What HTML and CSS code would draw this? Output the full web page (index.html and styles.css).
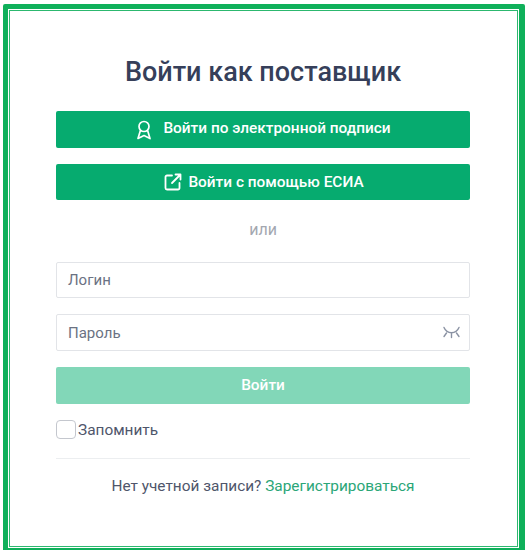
FILE: index.html
```html
<!DOCTYPE html>
<html lang="ru">
<head>
<meta charset="utf-8">
<title>Войти как поставщик</title>
<link rel="stylesheet" href="styles.css">
</head>
<body>
<div class="frame">
  <div class="inner">
    <main class="card">
      <h1 class="title">Войти как поставщик</h1>
      <button class="btn btn-sign" type="button">
        <svg class="icon-award" width="14" height="20" viewBox="0 0 14 20" fill="none" stroke="currentColor" stroke-width="1.700" stroke-linejoin="round"><circle cx="7" cy="6.500" r="5"/><path d="M3.400 10.500L1 18.500L7 15.500L13 18.500L10.600 10.500"/></svg>
        <span class="sign-label">Войти по электронной подписи</span>
      </button>
      <button class="btn btn-esia" type="button">
        <svg class="icon-ext" width="18" height="18" viewBox="0 0 18 18" fill="none" stroke="currentColor" stroke-width="1.800" stroke-linecap="round" stroke-linejoin="round"><path d="M8 2.500H3A1.500 1.500 0 0 0 1.500 4V15A1.500 1.500 0 0 0 3 16.500H14A1.500 1.500 0 0 0 15.500 15V10"/><path d="M8 10L16 2M11.500 1.500H16.500V6.500"/></svg>
        <span>Войти с помощью ЕСИА</span>
      </button>
      <div class="or">или</div>
      <div class="field field-login"><span class="placeholder">Логин</span></div>
      <div class="field field-pass">
        <span class="placeholder">Пароль</span>
        <svg class="icon-eye" width="17" height="13" viewBox="0 0 17 13" fill="none" stroke="#8a92a3" stroke-width="1.400" stroke-linecap="round"><path d="M1 1.500C4 8.500 13 8.500 16 1.500M1 10.500L3.500 7M16 10.500L13.500 7M8.500 7V11.500"/></svg>
      </div>
      <button class="btn btn-login" type="button">Войти</button>
      <label class="remember"><span class="check"></span><span>Запомнить</span></label>
      <hr class="divider">
      <p class="signup">Нет учетной записи? <a href="#" class="link">Зарегистрироваться</a></p>
    </main>
  </div>
</div>
</body>
</html>
```
FILE: styles.css
```css
html, body {
  margin: 0;
  height: 550px;
  overflow: hidden;
  background: #fff;
}
body {
  font-family: Roboto, "Noto Sans", sans-serif;
  padding: 4px 1px 0 3px;
  box-sizing: border-box;
}
.frame {
  border: 5px solid #0fb05a;
  border-right-width: 6px;
  border-radius: 2px;
  height: 549px;
  box-sizing: border-box;
  padding: 1px;
}
.inner {
  border: 1px solid #2cb86f;
  height: 100%;
  box-sizing: border-box;
  padding-right: 1px;
}
.card {
  width: 414px;
  margin: 0 auto;
  padding-top: 41px;
  display: flex;
  flex-direction: column;
}
.title {
  margin: 0;
  height: 40px;
  line-height: 40px;
  font-size: 27px;
  font-weight: 500;
  color: #363f5a;
  text-align: center;
}
.btn {
  border: 0;
  border-radius: 2px;
  background: #06ab6f;
  color: #fff;
  font: 500 15.400px Roboto, sans-serif;
  display: flex;
  align-items: center;
  justify-content: center;
  padding: 0;
}
.btn-sign { height: 37px; margin-top: 19px; gap: 12px; padding-left: 2px; }
.sign-label { margin-bottom: 3px; }
.btn-esia { height: 36px; margin-top: 16px; gap: 6px; padding-left: 2px; }
.or {
  margin-top: 20px;
  height: 20px;
  line-height: 20px;
  text-align: center;
  color: #a3a7b0;
  font-size: 16px;
}
.field {
  box-sizing: border-box;
  border: 1px solid #e2e4e8;
  border-radius: 2px;
  display: flex;
  align-items: center;
  justify-content: space-between;
  padding: 0 11px;
}
.field-login { height: 36px; margin-top: 22px; }
.field-pass { height: 37px; margin-top: 16px; padding-right: 9px; }
.placeholder { font-size: 15px; color: #6b7283; }
.btn-login {
  height: 37px;
  margin-top: 16px;
  padding-bottom: 2px;
  background: #82d7b8;
}
.remember {
  display: flex;
  align-items: center;
  gap: 2px;
  margin-top: 16px;
  height: 19px;
  font-size: 15.400px;
  color: #4f566b;
}
.check {
  box-sizing: border-box;
  width: 20px;
  height: 19px;
  border: 1px solid #c4c7ce;
  border-radius: 4px;
}
.divider {
  margin: 19px 0 0;
  border: 0;
  border-top: 1px solid #eceef0;
}
.signup {
  margin: 17px 0 0;
  height: 20px;
  line-height: 20px;
  text-align: center;
  font-size: 15.400px;
  color: #4f566b;
}
.link { color: #2ba678; text-decoration: none; }
```
